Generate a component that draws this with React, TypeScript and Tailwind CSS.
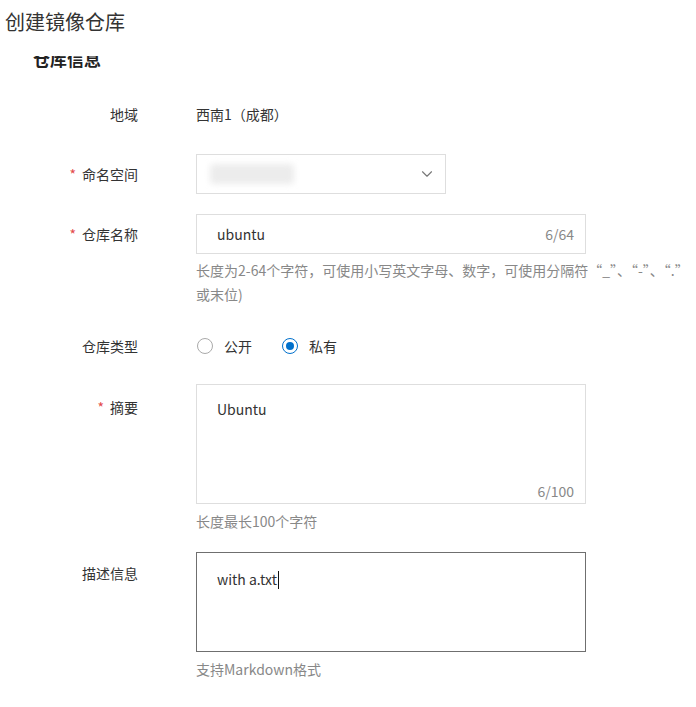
import { ChevronDown } from 'lucide-react';

const font = { fontFamily: '"Noto Sans CJK SC", "Noto Sans", sans-serif' };

function Label({ text, required, className = '' }: { text: string; required?: boolean; className?: string }) {
    return (
        <div className={`w-[138px] shrink-0 text-right text-[14px] text-[#333] ${className}`}>
            {required && <span className="mr-[6px] text-[#e34a4a]">*</span>}
            {text}
        </div>
    );
}

function Radio({ checked, label }: { checked?: boolean; label: string }) {
    return (
        <div className="flex items-center gap-[11px]">
            <span
                className={`flex h-[16px] w-[16px] items-center justify-center rounded-full border ${
                    checked ? 'border-[#0070cc] border-[1.5px]' : 'border-[#aaa]'
                } bg-white`}
            >
                {checked && <span className="h-[8px] w-[8px] rounded-full bg-[#0070cc]" />}
            </span>
            <span className="text-[14px] text-[#333]">{label}</span>
        </div>
    );
}

export default function App() {
    return (
        <div className="h-[707px] w-[696px] overflow-hidden bg-white" style={font}>
            <div className="h-[56px] pl-[5px] pt-[8px] text-[20px] leading-[28px] text-[#333]">创建镜像仓库</div>

            <div className="h-[651px] overflow-hidden">
                <div className="-mt-[9px] pl-[33px] text-[17px] font-bold leading-[24px] text-[#222]">仓库信息</div>

                {/* 地域 */}
                <div className="mt-[23px] flex h-[40px] items-center">
                    <Label text="地域" />
                    <div className="ml-[58px] text-[14px] text-[#333]">西南1（成都）</div>
                </div>

                {/* 命名空间 */}
                <div className="mt-[20px] flex items-center">
                    <Label text="命名空间" required />
                    <div className="ml-[58px] flex h-[40px] w-[250px] items-center justify-between border border-[#dedede] pl-[13px] pr-[9px]">
                        <div className="h-[20px] w-[84px] rounded-sm bg-[#ececec] blur-[3px]" />
                        <ChevronDown className="h-[18px] w-[18px] text-[#777]" strokeWidth={1.5} />
                    </div>
                </div>

                {/* 仓库名称 */}
                <div className="mt-[20px] flex items-start">
                    <Label text="仓库名称" required className="leading-[40px]" />
                    <div className="ml-[58px]">
                        <div className="flex h-[40px] w-[390px] items-center justify-between border border-[#dedede] pl-[20px] pr-[11px] text-[14px]">
                            <span className="text-[#333]">ubuntu</span>
                            <span className="text-[#888]">6/64</span>
                        </div>
                        <div className="mt-[4px] whitespace-nowrap text-[14px] leading-[24px] text-[#888]">
                            长度为2-64个字符，可使用小写英文字母、数字，可使用分隔符“_”、“-”、“.”
                            <br />
                            或末位)
                        </div>
                    </div>
                </div>

                {/* 仓库类型 */}
                <div className="mt-[20px] flex h-[40px] items-center">
                    <Label text="仓库类型" />
                    <div className="ml-[59px] flex items-center gap-[30px]">
                        <Radio label="公开" />
                        <Radio label="私有" checked />
                    </div>
                </div>

                {/* 摘要 */}
                <div className="mt-[18px] flex items-start">
                    <Label text="摘要" required className="pt-[12px] leading-[22px]" />
                    <div className="ml-[58px]">
                        <div className="relative h-[120px] w-[390px] border border-[#dedede] pl-[20px] pt-[13px] text-[14px] leading-[22px]">
                            <span className="text-[#333]">Ubuntu</span>
                            <span className="absolute bottom-[1px] right-[11px] text-[#888]">6/100</span>
                        </div>
                        <div className="mt-[5px] text-[14px] leading-[24px] text-[#888]">长度最长100个字符</div>
                    </div>
                </div>

                {/* 描述信息 */}
                <div className="mt-[19px] flex items-start">
                    <Label text="描述信息" className="pt-[10px] leading-[22px]" />
                    <div className="ml-[58px]">
                        <div className="h-[100px] w-[390px] border border-[#6f6f6f] pl-[20px] pt-[14px] text-[14px] leading-[22px]">
                            <span className="text-[#333]">with a.txt</span>
                            <span className="ml-[1px] inline-block h-[18px] w-[1px] translate-y-[4px] bg-[#111]" />
                        </div>
                        <div className="mt-[5px] text-[14px] leading-[24px] text-[#888]">支持Markdown格式</div>
                    </div>
                </div>
            </div>
        </div>
    );
}
